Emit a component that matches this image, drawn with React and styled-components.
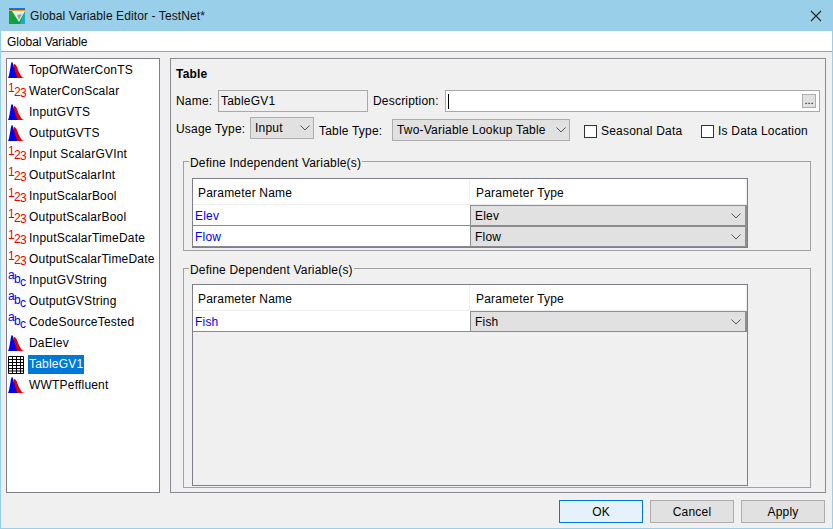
import React from "react";
import styled, { createGlobalStyle } from "styled-components";

const variables = [
  { name: "TopOfWaterConTS", type: "ts" },
  { name: "WaterConScalar", type: "num" },
  { name: "InputGVTS", type: "ts" },
  { name: "OutputGVTS", type: "ts" },
  { name: "Input ScalarGVInt", type: "num" },
  { name: "OutputScalarInt", type: "num" },
  { name: "InputScalarBool", type: "num" },
  { name: "OutputScalarBool", type: "num" },
  { name: "InputScalarTimeDate", type: "num" },
  { name: "OutputScalarTimeDate", type: "num" },
  { name: "InputGVString", type: "str" },
  { name: "OutputGVString", type: "str" },
  { name: "CodeSourceTested", type: "str" },
  { name: "DaElev", type: "ts" },
  { name: "TableGV1", type: "table", selected: true },
  { name: "WWTPeffluent", type: "ts" },
];

const Chevron = () => (
  <svg width="10" height="6" viewBox="0 0 10 6">
    <path d="M0.5 0.5 L5 5 L9.5 0.5" fill="none" stroke="#555" strokeWidth="1" />
  </svg>
);

const TsIcon = () => (
  <svg width="17" height="17" viewBox="0 0 17 17">
    <path d="M4 16 L6 2 C9 2 10 9 12 12 C13.5 15 15 16 17 16 Z" fill="#e00000" />
    <path d="M0 16 C2 13 2.5 0 4 0 C5.5 0 6 9 9.5 16 Z" fill="#0000f0" />
  </svg>
);

const SeqIcon = ({ chars, drops, color }) => (
  <Seq $color={color}>
    {chars.split("").map((c, i) => (
      <SeqChar key={c} $drop={drops[i]}>
        {c}
      </SeqChar>
    ))}
  </Seq>
);

const TableIcon = () => (
  <svg width="16" height="18" viewBox="0 0 16 18">
    <rect width="16" height="18" fill="#fff" />
    <path
      d="M0.5 0.5H15.5V17.5H0.5ZM4.5 0.5V17.5M8.5 0.5V17.5M12.5 0.5V17.5M0.5 3.5H15.5M0.5 6.5H15.5M0.5 9.5H15.5M0.5 12.5H15.5M0.5 15H15.5"
      fill="none"
      stroke="#000"
      strokeWidth="1"
    />
  </svg>
);

const iconFor = (type) => {
  if (type === "ts") return <TsIcon />;
  if (type === "num") return <SeqIcon chars="123" drops={[1, 5, 6]} color="#f00000" />;
  if (type === "str") return <SeqIcon chars="abc" drops={[-1, 3, 6]} color="#0000f0" />;
  return <TableIcon />;
};

const Logo = () => (
  <svg width="16" height="16" viewBox="0 0 16 16">
    <rect width="16" height="16" fill="#12a040" />
    <rect width="16" height="2" fill="#1f6fd0" />
    <rect y="2" width="16" height="1" fill="#f0a020" />
    <path d="M16 3 L16 16 L11 16 Z" fill="#18b0c8" />
    <path d="M3 3 L16 3 L10 14 Z" fill="#e8eeea" />
    <path d="M8 7 L13 6 L10 12 Z" fill="#98a4a4" />
  </svg>
);

const Param = ({ name }) => (
  <Row>
    <NameCell>{name}</NameCell>
    <TypeCell>
      <span>{name}</span>
      <Chevron />
    </TypeCell>
  </Row>
);

const App = () => (
  <Win>
    <Global />
    <TitleBar>
      <Logo />
      <TitleText>Global Variable Editor - TestNet*</TitleText>
      <CloseIcon width="12" height="12" viewBox="0 0 12 12">
        <path d="M1 1 L11 11 M11 1 L1 11" stroke="#222" strokeWidth="1.1" />
      </CloseIcon>
    </TitleBar>
    <MenuBar>Global Variable</MenuBar>
    <Body>
      <Main>
        <VarList>
          {variables.map((v) => (
            <VarRow key={v.name}>
              <IconSlot>{iconFor(v.type)}</IconSlot>
              <VarName $selected={v.selected}>{v.name}</VarName>
            </VarRow>
          ))}
        </VarList>
        <Panel>
          <Heading>Table</Heading>
          <FormRow>
            <NameLabel>Name:</NameLabel>
            <NameInput>TableGV1</NameInput>
            <DescLabel>Description:</DescLabel>
            <DescInput>
              <Caret />
              <DotsButton>...</DotsButton>
            </DescInput>
          </FormRow>
          <TypeRow>
            <UsageLabel>Usage Type:</UsageLabel>
            <Select $w={64}>
              <span>Input</span>
              <Chevron />
            </Select>
            <TableTypeLabel>Table Type:</TableTypeLabel>
            <TableTypeSelect $w={178}>
              <span>Two-Variable Lookup Table</span>
              <Chevron />
            </TableTypeSelect>
            <Check $w={117} $ml={14}>
              <Box />
              Seasonal Data
            </Check>
            <Check>
              <Box />
              Is Data Location
            </Check>
          </TypeRow>
          <Group $h={95} $mt={15}>
            <legend>Define Independent Variable(s)</legend>
            <Grid $mt={12}>
              <HeadRow>
                <HeadCell $w={277}>Parameter Name</HeadCell>
                <HeadCell>Parameter Type</HeadCell>
              </HeadRow>
              <Param name="Elev" />
              <Param name="Flow" />
            </Grid>
          </Group>
          <Group $h={225} $mt={12}>
            <legend>Define Dependent Variable(s)</legend>
            <Grid $mt={11} $fill>
              <HeadRow>
                <HeadCell $w={277}>Parameter Name</HeadCell>
                <HeadCell>Parameter Type</HeadCell>
              </HeadRow>
              <Param name="Fish" />
              <Empty />
            </Grid>
          </Group>
        </Panel>
      </Main>
      <Footer>
        <Button $primary>OK</Button>
        <Button>Cancel</Button>
        <Button>Apply</Button>
      </Footer>
    </Body>
  </Win>
);

export default App;

const Global = createGlobalStyle`
  html, body {
    margin: 0;
    padding: 0;
    background: #99cfe8;
  }
  * {
    box-sizing: border-box;
  }
`;

const Win = styled.div`
  width: 833px;
  height: 529px;
  display: flex;
  flex-direction: column;
  background: #f0f0f0;
  border: 1px solid #99cfe8;
  border-top: 0;
  font-family: "Liberation Sans", Arial, sans-serif;
  font-size: 12px;
  letter-spacing: 0.2px;
  color: #000;
  overflow: hidden;
`;

const TitleBar = styled.div`
  height: 31px;
  flex: none;
  display: flex;
  align-items: center;
  padding: 0 10px 0 8px;
  background: #99cfe8;
`;

const TitleText = styled.div`
  margin-left: 5px;
  flex: 1;
  color: #111;
  letter-spacing: 0.1px;
`;

const CloseIcon = styled.svg`
  flex: none;
`;

const MenuBar = styled.div`
  height: 21px;
  flex: none;
  padding: 4px 0 0 6px;
  background: #fff;
  border-bottom: 1px solid #a0a0a0;
  letter-spacing: -0.05px;
`;

const Body = styled.div`
  flex: 1;
  display: flex;
  flex-direction: column;
  padding: 6px 6px 6px 5px;
`;

const Main = styled.div`
  flex: 1;
  display: flex;
  gap: 10px;
  min-height: 0;
`;

const VarList = styled.div`
  width: 154px;
  flex: none;
  padding: 1px 0 0 1px;
  background: #fff;
  border: 1px solid #7f7f8a;
`;

const VarRow = styled.div`
  height: 21px;
  display: flex;
  align-items: center;
`;

const IconSlot = styled.div`
  width: 20px;
  height: 21px;
  flex: none;
  display: flex;
  align-items: center;
`;

const Seq = styled.div`
  display: flex;
  align-self: flex-start;
  color: ${(p) => p.$color};
  font-size: 12px;
  line-height: 13px;
  letter-spacing: 0;
`;

const SeqChar = styled.span`
  width: 6px;
  margin-top: ${(p) => p.$drop}px;
`;

const VarName = styled.span`
  height: 19px;
  padding: 0 1px;
  line-height: 19px;
  white-space: nowrap;
  background: ${(p) => (p.$selected ? "#0078d7" : "transparent")};
  color: ${(p) => (p.$selected ? "#fff" : "#000")};
`;

const Panel = styled.div`
  flex: 1;
  padding: 0 5px 4px 5px;
  border: 1px solid #8a8a92;
`;

const Heading = styled.div`
  height: 31px;
  padding-top: 8px;
  font-weight: bold;
`;

const FormRow = styled.div`
  height: 22px;
  display: flex;
  align-items: center;
`;

const Field = styled.div`
  height: 22px;
  border: 1px solid #a9a9a9;
`;

const NameLabel = styled.span`
  width: 42px;
  flex: none;
`;

const NameInput = styled(Field)`
  width: 150px;
  flex: none;
  padding: 3px 0 0 2px;
  background: #f0f0f0;
`;

const DescLabel = styled.span`
  width: 72px;
  flex: none;
  margin-left: 5px;
`;

const DescInput = styled(Field)`
  width: 375px;
  flex: none;
  display: flex;
  align-items: center;
  justify-content: space-between;
  padding: 0 3px 0 2px;
  background: #fff;
`;

const Caret = styled.div`
  width: 1px;
  height: 15px;
  background: #000;
`;

const DotsButton = styled.div`
  width: 14px;
  height: 14px;
  border: 1px solid #adadad;
  background: #e1e1e1;
  font-size: 11px;
  letter-spacing: 0;
  line-height: 11px;
  text-align: center;
`;

const TypeRow = styled.div`
  height: 24px;
  margin-top: 5px;
  display: flex;
  align-items: flex-start;
`;

const UsageLabel = styled.span`
  width: 74px;
  flex: none;
  padding-top: 5px;
`;

const Select = styled.div`
  width: ${(p) => p.$w}px;
  height: 22px;
  flex: none;
  padding: 0 3px 0 4px;
  display: flex;
  align-items: center;
  justify-content: space-between;
  background: #e1e1e1;
  border: 1px solid #adadad;
`;

const TableTypeLabel = styled.span`
  width: 73px;
  flex: none;
  margin-left: 5px;
  padding-top: 7px;
`;

const TableTypeSelect = styled(Select)`
  margin-top: 2px;
`;

const Check = styled.div`
  width: ${(p) => (p.$w ? `${p.$w}px` : "auto")};
  flex: none;
  margin: 7px 0 0 ${(p) => p.$ml || 0}px;
  display: flex;
  align-items: center;
  gap: 4px;
  white-space: nowrap;
`;

const Box = styled.div`
  width: 13px;
  height: 13px;
  flex: none;
  background: #fff;
  border: 1px solid #333;
`;

const Group = styled.fieldset`
  width: 628px;
  min-width: 0;
  height: ${(p) => p.$h}px;
  margin: ${(p) => p.$mt}px 0 0 7px;
  padding: 0 8px;
  border: 1px solid #a0a0a0;

  legend {
    height: 10px;
    margin-left: -3px;
    padding: 0 1px;
    line-height: 14px;
  }
`;

const Grid = styled.div`
  width: 556px;
  height: ${(p) => (p.$fill ? "202px" : "70px")};
  margin-top: ${(p) => p.$mt}px;
  display: flex;
  flex-direction: column;
  border: 1px solid #7f7f8a;
  background: #f0f0f0;
`;

const HeadRow = styled.div`
  height: 26px;
  flex: none;
  display: flex;
  background: #fff;
  border-bottom: 1px solid #eee;
`;

const HeadCell = styled.div`
  width: ${(p) => (p.$w ? `${p.$w}px` : "auto")};
  flex: ${(p) => (p.$w ? "none" : 1)};
  padding: 7px 0 0 ${(p) => (p.$w ? 5 : 6)}px;
  border-right: 1px solid #eee;
`;

const Row = styled.div`
  height: 21px;
  flex: none;
  display: flex;
  background: #fff;
  border-bottom: 1px solid #8a8a92;
`;

const NameCell = styled.div`
  width: 277px;
  flex: none;
  padding: 4px 0 0 2px;
  color: #0000f0;
`;

const TypeCell = styled.div`
  flex: 1;
  padding: 1px 4px 0 4px;
  display: flex;
  align-items: center;
  justify-content: space-between;
  background: #e1e1e1;
  border: 1px solid #8f8f8f;
  border-width: 1px 2px 0 1px;
`;

const Empty = styled.div`
  flex: 1;
`;

const Footer = styled.div`
  height: 30px;
  flex: none;
  display: flex;
  justify-content: flex-end;
  align-items: flex-end;
  gap: 7px;
  padding-right: 1px;
`;

const Button = styled.div`
  width: 84px;
  height: 23px;
  display: flex;
  align-items: center;
  justify-content: center;
  background: ${(p) => (p.$primary ? "#e5f1fb" : "#e1e1e1")};
  border: 1px solid ${(p) => (p.$primary ? "#0078d7" : "#adadad")};
`;
